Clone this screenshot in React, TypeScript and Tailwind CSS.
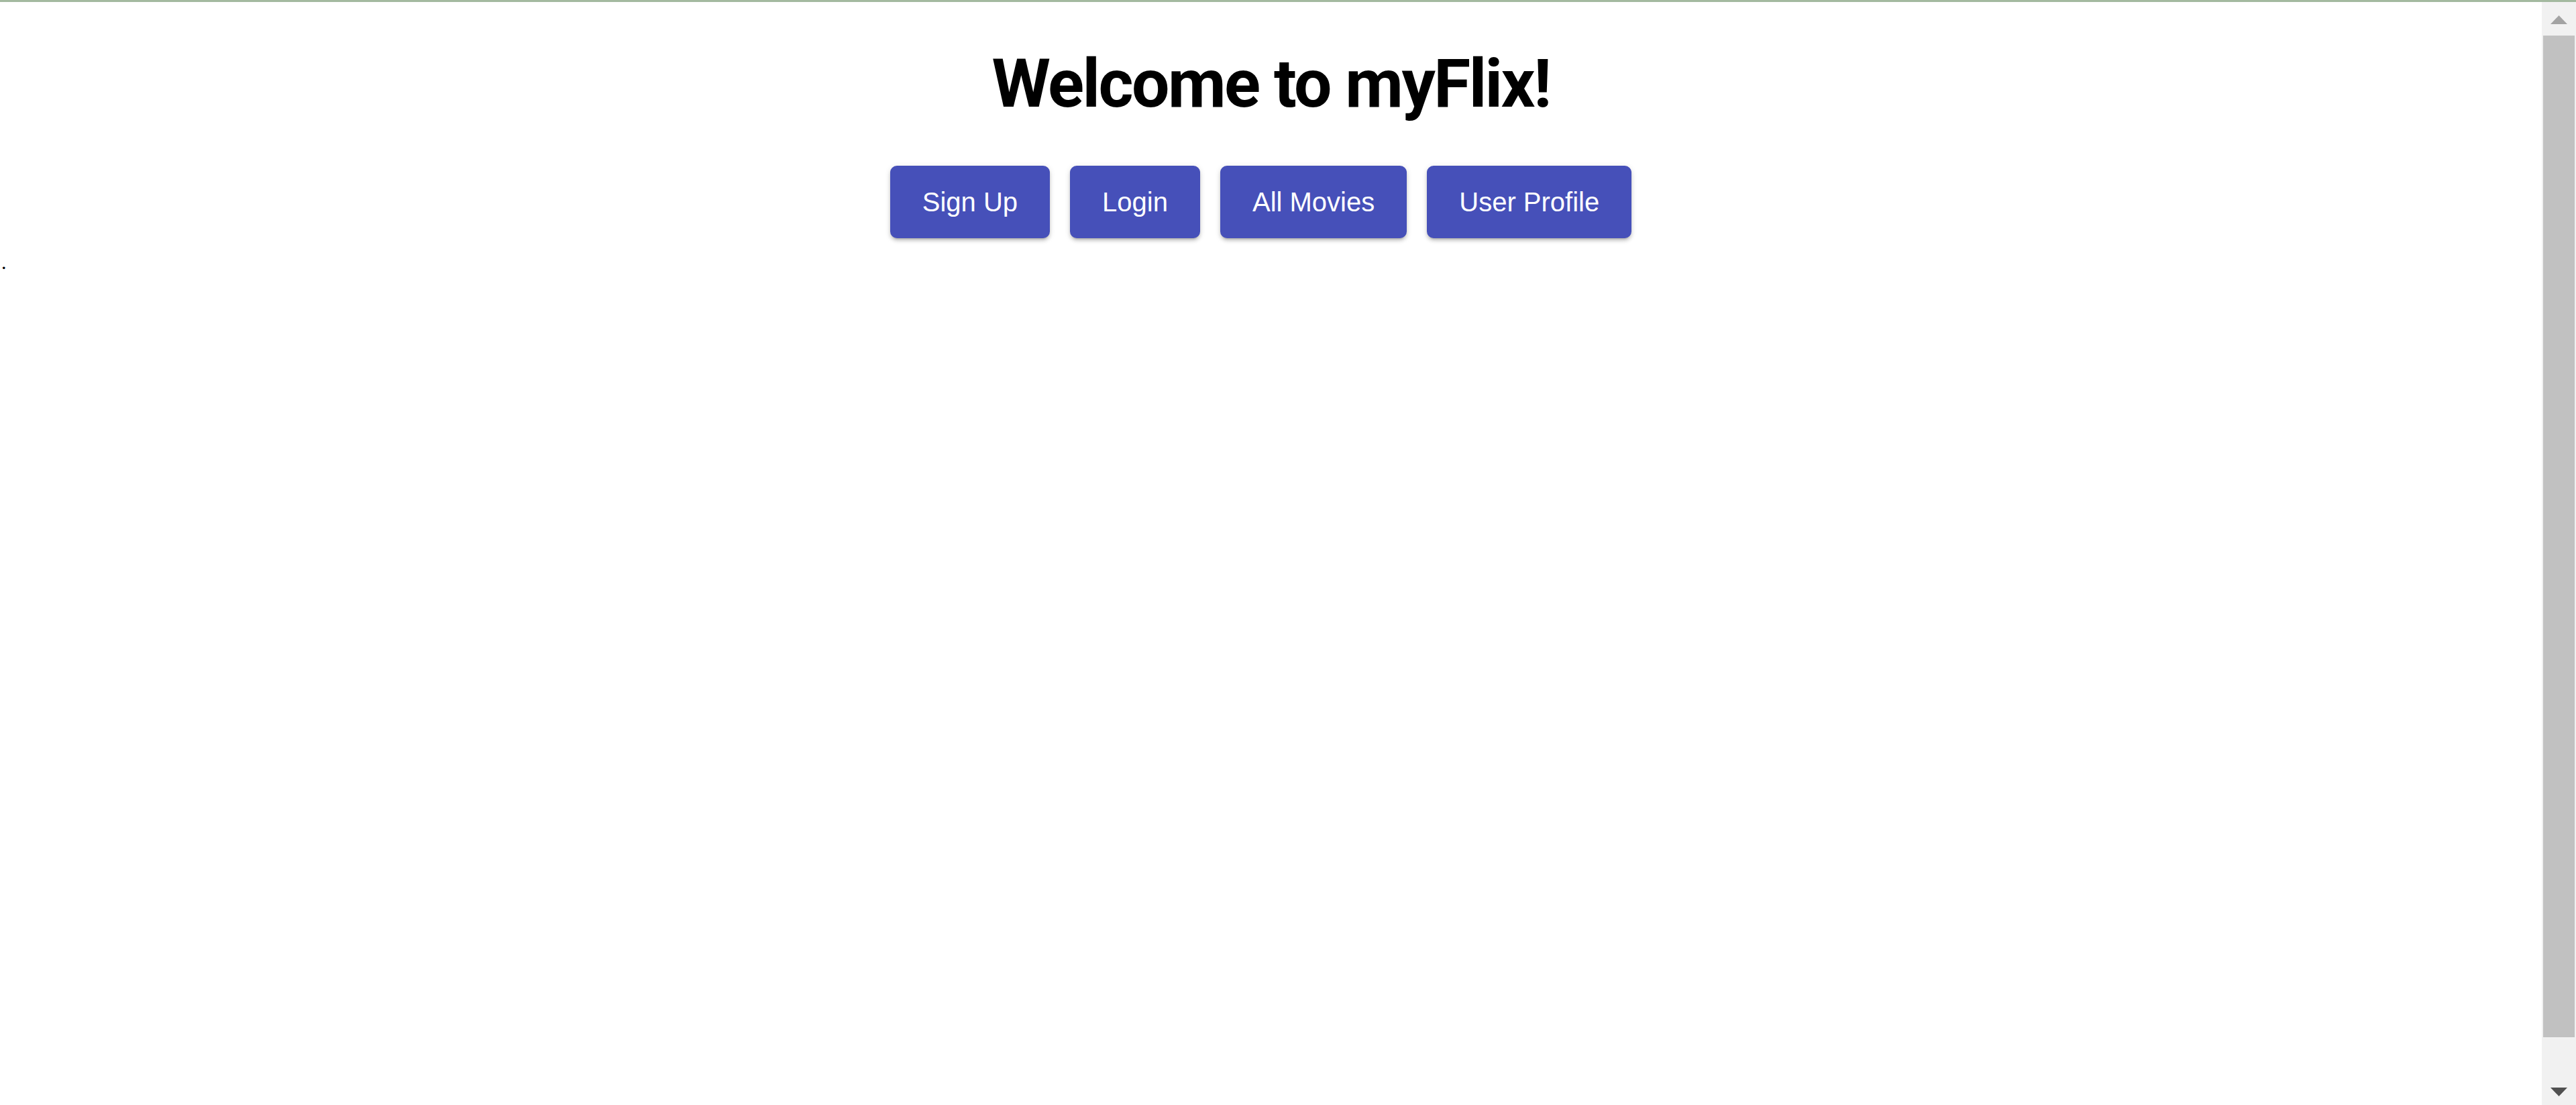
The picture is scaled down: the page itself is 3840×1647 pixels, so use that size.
const links = ["Sign Up", "Login", "All Movies", "User Profile"];

function Scrollbar() {
  return (
    <div className="w-[51px] shrink-0 bg-[#f1f1f1] flex flex-col items-center">
      <svg className="mt-[20px] shrink-0" width="25" height="13" viewBox="0 0 25 13">
        <polygon points="12.5,0 25,13 0,13" fill="#a3a3a3" />
      </svg>
      <div className="mt-[17px] h-[1493px] w-[47px] shrink-0 bg-[#c1c1c1]" />
      <div className="flex-1" />
      <svg className="mb-[13px] shrink-0" width="25" height="13" viewBox="0 0 25 13">
        <polygon points="0,0 25,0 12.5,13" fill="#505050" />
      </svg>
    </div>
  );
}

export default function App() {
  return (
    <div className="h-[1647px] w-full overflow-hidden flex flex-col bg-white">
      <div className="h-[3px] shrink-0 bg-[#a4b9a0]" />
      <div className="flex flex-1 min-h-0">
        <main className="flex-1 min-w-0">
          {/* Header */}
          <h1 className="mt-[62px] text-center text-[100px] leading-[120px] font-bold text-black font-['Roboto',sans-serif] tracking-[-0.025em]">
            Welcome to myFlix!
          </h1>

          {/* Nav buttons */}
          <nav className="mt-[62px] flex justify-center">
            {links.map((l) => (
              <button
                key={l}
                className="mr-[30px] rounded-[10px] bg-[#4650b9] px-12 py-6 text-[40px] leading-[60px] text-white font-['Liberation_Sans',Arial,sans-serif] shadow-[0_5px_3px_-4px_rgba(0,0,0,0.2),0_4px_5px_0_rgba(0,0,0,0.14),0_2px_10px_0_rgba(0,0,0,0.12)]"
              >
                {l}
              </button>
            ))}
          </nav>

          <div className="mt-[21px] pl-[2px] text-[30px] leading-[30px] text-black font-['Liberation_Serif',serif]">
            .
          </div>
        </main>
        <Scrollbar />
      </div>
    </div>
  );
}
